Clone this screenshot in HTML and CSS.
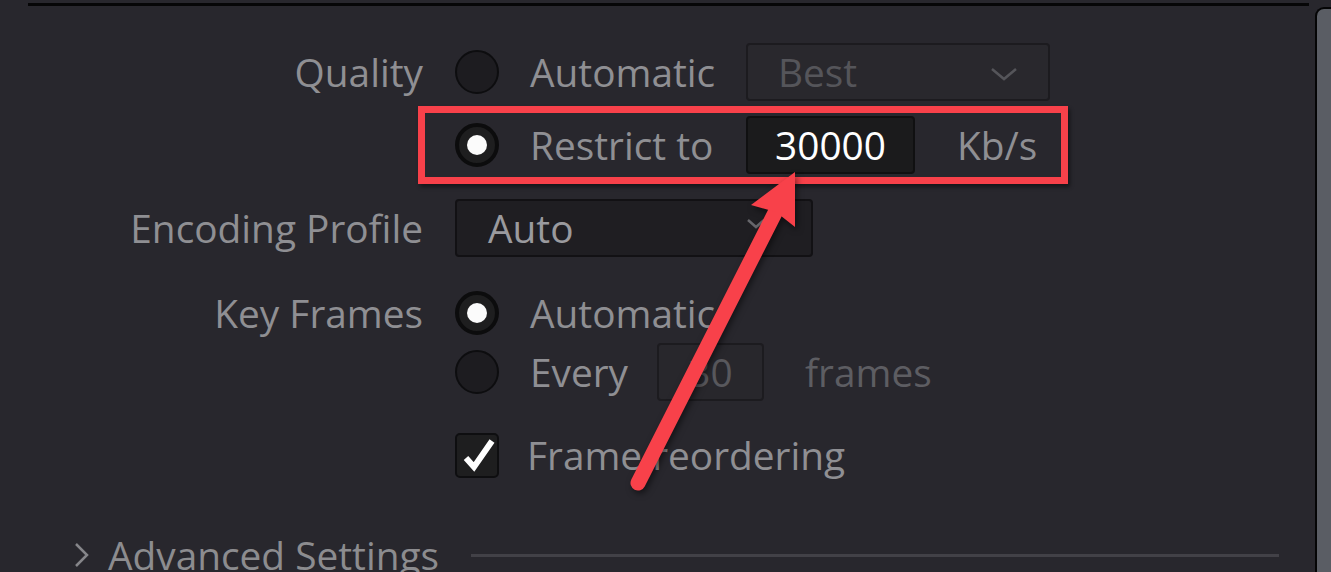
FILE: index.html
```html
<!DOCTYPE html>
<html lang="en">
<head>
    <meta charset="UTF-8">
    <meta name="viewport" content="width=device-width, initial-scale=1.0">
    <title>Export Settings</title>
    <link rel="stylesheet" href="styles.css">
</head>
<body>
    <div class="window">
        <!-- Settings panel -->
        <main class="panel">
            <div class="form">
                <div class="row row-quality">
                    <div class="label">Quality</div>
                    <div class="controls">
                        <span class="radio"></span>
                        <span class="option wide">Automatic</span>
                        <div class="select select-dim">
                            <span>Best</span>
                            <svg class="chevron" width="28" height="16" viewBox="0 0 28 16">
                                <polyline points="2,3 14,13 26,3" fill="none" stroke="#55555a" stroke-width="2.5"/>
                            </svg>
                        </div>
                    </div>
                </div>

                <div class="row row-restrict">
                    <div class="label"></div>
                    <div class="controls">
                        <span class="radio checked"></span>
                        <span class="option wide">Restrict to</span>
                        <div class="field">30000</div>
                        <span class="option unit">Kb/s</span>
                        <!-- annotation box -->
                        <div class="highlight"></div>
                    </div>
                </div>

                <div class="row row-profile">
                    <div class="label">Encoding Profile</div>
                    <div class="controls">
                        <div class="select select-profile">
                            <span>Auto</span>
                            <svg class="mini-arrow" width="22" height="12" viewBox="0 0 22 12">
                                <polyline points="3,2 11,9 19,2" fill="none" stroke="#66666b" stroke-width="2.5"/>
                            </svg>
                        </div>
                    </div>
                </div>

                <div class="row row-keyframes">
                    <div class="label">Key Frames</div>
                    <div class="controls">
                        <span class="radio checked"></span>
                        <span class="option">Automatic</span>
                    </div>
                </div>

                <div class="row row-every">
                    <div class="label"></div>
                    <div class="controls">
                        <span class="radio"></span>
                        <span class="option">Every</span>
                        <div class="field field-dim">30</div>
                        <span class="option dim frames">frames</span>
                    </div>
                </div>

                <div class="row row-reorder">
                    <div class="label"></div>
                    <div class="controls">
                        <span class="checkbox">
                            <svg width="40" height="40" viewBox="0 0 40 40">
                                <polyline points="9,23 17,32 35,6" fill="none" stroke="#fff" stroke-width="6"/>
                            </svg>
                        </span>
                        <span class="option check-label">Frame reordering</span>
                    </div>
                </div>

                <div class="advanced">
                    <svg class="expander" width="18" height="28" viewBox="0 0 18 28">
                        <polyline points="3,3 14,14 3,25" fill="none" stroke="#86868a" stroke-width="2.5"/>
                    </svg>
                    <span class="advanced-title">Advanced Settings</span>
                    <span class="advanced-rule"></span>
                </div>
            </div>
        </main>

        <!-- Scrollbar -->
        <div class="scroll">
            <div class="scroll-thumb"></div>
        </div>

        <!-- annotation arrow -->
        <svg class="arrow" width="1331" height="572" viewBox="0 0 1331 572">
            <line x1="638" y1="483" x2="780" y2="203" stroke="#f8414a" stroke-width="15" stroke-linecap="round"/>
            <polygon points="795,172 751,205 776,212 795,227" fill="#f8414a"/>
        </svg>
    </div>
</body>
</html>
```

FILE: styles.css
```css
body {
    background-color: #28272d;
    color: #8f8f93;
    font-family: 'Open Sans', sans-serif;
    font-size: 38.8px;
    margin: 0;
    padding: 0;
    overflow: hidden;
}

.window {
    position: relative;
    display: flex;
    height: 572px;
    padding-top: 3px;
    box-sizing: border-box;
}

.panel {
    width: 1281px;
    margin-left: 28px;
    border-top: 3px solid #060607;
}

.form {
    display: flex;
    flex-direction: column;
    padding-top: 37px;
}

.row {
    display: grid;
    grid-template-columns: 395px auto;
    column-gap: 32px;
    height: 58px;
}

.row-restrict { margin-top: 15px; }
.row-profile { margin-top: 25px; }
.row-keyframes { margin-top: 27px; }
.row-every { margin-top: 1px; }
.row-reorder { margin-top: 25px; }

.label {
    display: flex;
    align-items: center;
    justify-content: flex-end;
    white-space: nowrap;
}

.controls {
    position: relative;
    display: flex;
    align-items: center;
}

.option {
    margin-left: 31px;
    white-space: nowrap;
}

.option.wide {
    width: 216px;
}

.option.unit {
    margin-left: 42px;
}

.option.frames {
    margin-left: 41px;
}

.option.dim {
    color: #5d5d62;
}

.check-label {
    margin-left: 28px;
}

/* Radio buttons */
.radio {
    position: relative;
    width: 44px;
    height: 44px;
    box-sizing: border-box;
    border-radius: 50%;
    background-color: #1d1c20;
    border: 2px solid #0d0d0f;
    flex: none;
}

.radio.checked {
    background-color: #1e1e1f;
    border: 4px solid #0c0c0d;
}

.radio.checked::after {
    content: '';
    position: absolute;
    left: 8px;
    top: 8px;
    width: 20px;
    height: 20px;
    border-radius: 50%;
    background-color: #fbfbfb;
}

/* Checkbox */
.checkbox {
    display: flex;
    align-items: center;
    justify-content: center;
    width: 44px;
    height: 45px;
    box-sizing: border-box;
    background-color: #1e1e1f;
    border: 2px solid #0e0e10;
    border-radius: 5px;
    flex: none;
}

/* Dropdowns and fields */
.select {
    display: flex;
    align-items: center;
    justify-content: space-between;
    height: 58px;
    box-sizing: border-box;
    border-radius: 4px;
}

.select-dim {
    width: 304px;
    padding: 0 30px 0 30px;
    border: 2px solid #1c1b1f;
    background-color: #29282d;
    color: #55555a;
}

.select-profile {
    width: 358px;
    padding: 0 44px 0 31px;
    border: 2px solid #121114;
    background-color: #1f1e22;
    color: #9a9a9e;
}

.chevron {
    margin-top: 4px;
}

.mini-arrow {
    margin-top: -8px;
}

.field {
    display: flex;
    align-items: center;
    justify-content: center;
    width: 169px;
    height: 58px;
    box-sizing: border-box;
    border: 2px solid #101011;
    border-radius: 4px;
    background-color: #1b1b1c;
    color: #ffffff;
}

.field-dim {
    width: 107px;
    margin-left: 29px;
    border-color: #1c1b1f;
    background-color: #28272c;
    color: #58585d;
}

/* Red annotation box around the bitrate row */
.highlight {
    position: absolute;
    left: -37px;
    top: -10px;
    width: 650px;
    height: 78px;
    box-sizing: border-box;
    border: 7px solid #f8414a;
    box-shadow: 2px 3px 4px rgba(0, 0, 0, 0.45);
}

/* Advanced Settings */
.advanced {
    display: flex;
    align-items: center;
    height: 52px;
    margin-top: 45px;
    padding-left: 45px;
    color: #8c8c8f;
}

.expander {
    flex: none;
}

.advanced-title {
    margin-left: 17px;
    white-space: nowrap;
}

.advanced-rule {
    flex: 1;
    height: 3px;
    margin-left: 32px;
    margin-right: 30px;
    background-color: #424147;
}

/* Scrollbar */
.scroll {
    width: 16px;
    margin-left: 6px;
    margin-top: 4px;
}

.scroll-thumb {
    height: 100%;
    box-sizing: border-box;
    border-left: 2px solid #050506;
    border-top: 2px solid #050506;
    border-top-left-radius: 9px;
    background-color: #5a5d64;
}

.arrow {
    position: absolute;
    left: 0;
    top: 0;
    pointer-events: none;
    filter: drop-shadow(2px 3px 3px rgba(0, 0, 0, 0.5));
}
```
